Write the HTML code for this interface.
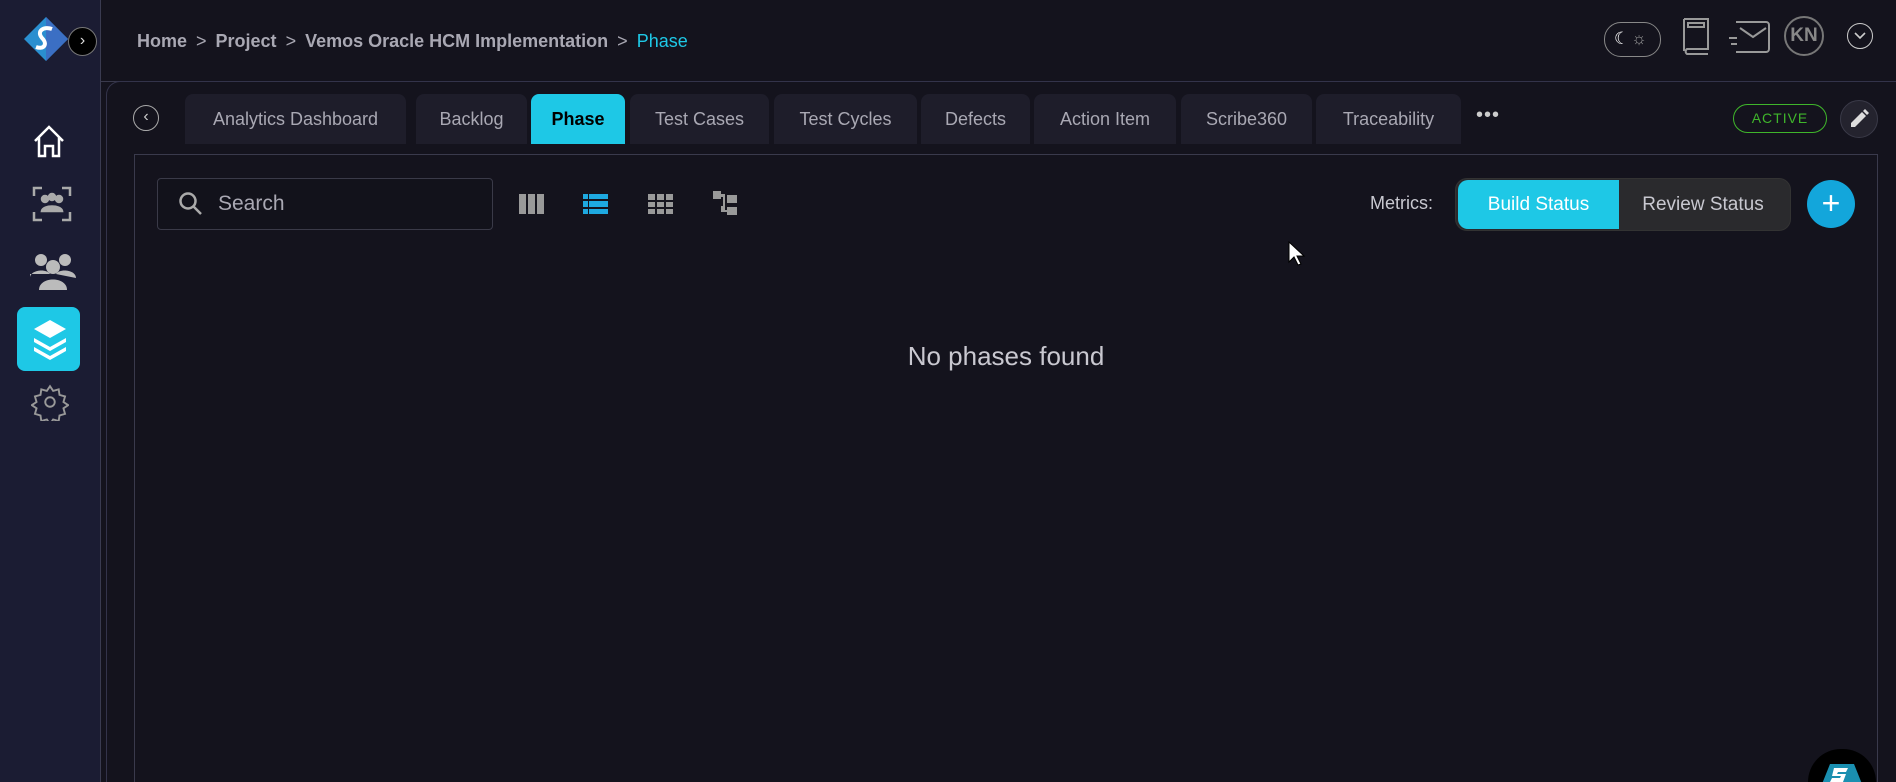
<!DOCTYPE html>
<html style="overflow:hidden;width:1896px;height:782px"><head><meta charset="utf-8"><style>
*{box-sizing:border-box;margin:0;padding:0}
body{width:1896px;height:782px;overflow:hidden;background:#14131d;font-family:"Liberation Sans",sans-serif;position:relative}
.a{position:absolute}
.side{left:0;top:0;width:101px;height:782px;background:#1b1c33;border-right:1px solid #3a3b50}
.bc{left:137px;top:31px;font-size:18px;font-weight:bold;color:#a9a8b3;white-space:nowrap}
.bc span.s{color:#a9a8b3;font-weight:normal;margin:0 9px}
.hdr{left:101px;top:81px;width:1795px;height:1px;background:#3a3a4c}
.panel{left:106px;top:81px;width:1790px;height:701px;border:1px solid #33334a;border-radius:14px 0 0 0;border-right:none;border-bottom:none}
.tab{top:94px;height:50px;background:#1e1d2a;border-radius:8px 8px 0 0;color:#a9a8b3;font-size:18px;text-align:center;line-height:50px}
.inner{left:134px;top:154px;width:1744px;height:628px;border:1px solid #3a3a4c;border-bottom:none}
</style></head><body>
<div class="a side"></div>
<svg class="a" style="left:20px;top:14px" width="52" height="52" viewBox="0 0 52 52"><path d="M26 3 L48 25 L26 47 L4 25 Z" fill="#2a8fd0"/><path d="M26 3 L48 25 L26 47 Z" fill="#3b6fc4"/><path d="M32 15 C24 12 16 17 22 24 C28 30 24 36 16 33" stroke="#fff" stroke-width="4" fill="none"/></svg>
<div class="a" style="left:68px;top:27px;width:29px;height:29px;border-radius:50%;background:#000;border:1px solid #777;color:#ddd;font-size:16px;text-align:center;line-height:26px">›</div>
<svg class="a" style="left:32px;top:124px" width="34" height="36" viewBox="0 0 34 36" fill="none" stroke="#fff" stroke-width="2.5"><path d="M3 17 L17 3 L31 17 M7 13 V32 H13 V22 H21 V32 H27 V13"/></svg>
<svg class="a" style="left:32px;top:186px" width="40" height="36" viewBox="0 0 40 36" fill="none" stroke="#aaa" stroke-width="2.5"><path d="M2 10V2h8M30 2h8v8M2 26v8h8M30 34h8v-8"/><circle cx="13" cy="13" r="3" fill="#aaa"/><circle cx="20" cy="11" r="3" fill="#aaa"/><circle cx="27" cy="13" r="3" fill="#aaa"/><path d="M10 25c1-6 19-6 20 0z" fill="#aaa"/></svg>
<svg class="a" style="left:30px;top:252px" width="46" height="40" viewBox="0 0 46 40" fill="#bbb"><circle cx="11" cy="8" r="6"/><circle cx="35" cy="8" r="6"/><circle cx="23" cy="15" r="7"/><path d="M0 26c0-8 16-10 20-4H0zM26 22c4-6 20-4 20 4z"/><path d="M9 38c0-14 28-14 28 0z"/></svg>
<div class="a" style="left:17px;top:307px;width:63px;height:64px;background:#1ec8e6;border-radius:8px"></div>
<svg class="a" style="left:32px;top:318px" width="36" height="42" viewBox="0 0 36 42" fill="#fff"><path d="M18 2L34 11L18 20L2 11Z"/><path d="M2 20L18 29L34 20L34 24L18 33L2 24Z"/><path d="M2 29L18 38L34 29L34 33L18 42L2 33Z"/></svg>
<svg class="a" style="left:31px;top:383px" width="38" height="38" viewBox="0 0 24 24" fill="none" stroke="#999" stroke-width="1.2"><circle cx="12" cy="12" r="3"/><path d="M12 2l2 3 3.5-1 .5 3.5 3.5 1-1 3.5 3 2-3 2 1 3.5-3.5 1-.5 3.5-3.5-1-2 3-2-3-3.5 1-.5-3.5-3.5-1 1-3.5-3-2 3-2-1-3.5 3.5-1 .5-3.5 3.5 1z"/></svg>

<div class="a bc">Home<span class="s">&gt;</span>Project<span class="s">&gt;</span>Vemos Oracle HCM Implementation<span class="s">&gt;</span><span style="color:#1ec8e6;font-weight:normal">Phase</span></div>
<div class="a" style="left:1604px;top:22px;width:57px;height:35px;border:1px solid #888;border-radius:17px;color:#fff;font-size:17px;line-height:32px;padding-left:9px">☾<span style="color:#999;margin-left:2px">☼</span></div>
<svg class="a" style="left:1682px;top:17px" width="28" height="38" viewBox="0 0 28 38" fill="none" stroke="#999" stroke-width="2"><path d="M2 2h24v30H5a3 3 0 0 0 0 5h21M2 2v32"/><rect x="6" y="6" width="16" height="4"/></svg>
<svg class="a" style="left:1728px;top:20px" width="42" height="34" viewBox="0 0 42 34" fill="none" stroke="#999" stroke-width="2"><path d="M8 2h30a3 3 0 0 1 3 3v24a3 3 0 0 1-3 3H8M12 8l13 9 13-9M1 18h8M3 24h6"/></svg>
<div class="a" style="left:1784px;top:16px;width:40px;height:40px;border-radius:50%;border:2px solid #777;color:#888;font-weight:bold;font-size:19px;text-align:center;line-height:36px">KN</div>
<div class="a" style="left:1847px;top:23px;width:26px;height:26px;border-radius:50%;border:1.5px solid #ccc"></div>
<svg class="a" style="left:1854px;top:32px" width="12" height="8" viewBox="0 0 12 8" fill="none" stroke="#ccc" stroke-width="1.6"><path d="M1 1l5 5 5-5"/></svg>

<div class="a hdr"></div>
<div class="a panel"></div>
<div class="a" style="left:133px;top:105px;width:26px;height:26px;border-radius:50%;border:1.5px solid #aaa;color:#ccc;font-size:16px;text-align:center;line-height:22px">‹</div>
<div class="a tab" style="left:185px;width:221px">Analytics Dashboard</div>
<div class="a tab" style="left:416px;width:111px">Backlog</div>
<div class="a tab" style="left:531px;width:94px;background:#1ec8e6;color:#000;font-weight:bold">Phase</div>
<div class="a tab" style="left:630px;width:139px">Test Cases</div>
<div class="a tab" style="left:774px;width:143px">Test Cycles</div>
<div class="a tab" style="left:921px;width:109px">Defects</div>
<div class="a tab" style="left:1034px;width:142px">Action Item</div>
<div class="a tab" style="left:1181px;width:131px">Scribe360</div>
<div class="a tab" style="left:1316px;width:145px">Traceability</div>
<div class="a" style="left:1476px;top:104px;color:#ccc;font-size:20px;letter-spacing:1px">•••</div>
<div class="a" style="left:1733px;top:104px;width:94px;height:29px;border:1.5px solid #3fb52b;border-radius:15px;color:#3fb52b;font-size:14px;text-align:center;line-height:26px;letter-spacing:1px">ACTIVE</div>
<div class="a" style="left:1840px;top:100px;width:38px;height:38px;border-radius:50%;background:#24232e;border:1px solid #3a3a48"></div>
<svg class="a" style="left:1849px;top:109px" width="20" height="20" viewBox="0 0 20 20" fill="#ddd"><path d="M2 14L13 3l4 4L6 18H2z M14 2l2-2 4 4-2 2z"/></svg>

<div class="a inner"></div>
<div class="a" style="left:157px;top:178px;width:336px;height:52px;border:1px solid #3a3a48;border-radius:4px;background:#12121b"></div>
<svg class="a" style="left:178px;top:191px" width="26" height="26" viewBox="0 0 26 26" fill="none" stroke="#aaa" stroke-width="2.5"><circle cx="10" cy="10" r="7.5"/><path d="M15.5 15.5L23 23"/></svg>
<div class="a" style="left:218px;top:192px;font-size:21px;color:#a9a8b3">Search</div>
<svg class="a" style="left:519px;top:192px" width="26" height="24" viewBox="0 0 26 24" fill="#999"><rect x="0" y="2" width="7" height="20"/><rect x="9" y="2" width="7" height="20"/><rect x="18" y="2" width="7" height="20"/></svg>
<svg class="a" style="left:583px;top:192px" width="25" height="24" viewBox="0 0 25 24" fill="#1ea9e0"><rect x="0" y="2" width="5" height="5"/><rect x="6" y="2" width="19" height="5"/><rect x="0" y="9" width="5" height="6"/><rect x="6" y="9" width="19" height="6"/><rect x="0" y="17" width="5" height="5"/><rect x="6" y="17" width="19" height="5"/></svg>
<svg class="a" style="left:648px;top:192px" width="25" height="24" viewBox="0 0 25 24" fill="#999"><rect x="0" y="2" width="7" height="6"/><rect x="9" y="2" width="7" height="6"/><rect x="18" y="2" width="7" height="6"/><rect x="0" y="10" width="7" height="5"/><rect x="9" y="10" width="7" height="5"/><rect x="18" y="10" width="7" height="5"/><rect x="0" y="17" width="7" height="5"/><rect x="9" y="17" width="7" height="5"/><rect x="18" y="17" width="7" height="5"/></svg>
<svg class="a" style="left:713px;top:191px" width="26" height="26" viewBox="0 0 26 26" fill="#999"><rect x="0" y="0" width="8" height="8"/><rect x="14" y="4" width="10" height="8"/><rect x="14" y="16" width="10" height="8"/><path d="M8 3h4v16h2v2h-6V15h2V6H8z"/></svg>
<div class="a" style="left:1370px;top:193px;font-size:18px;color:#c8c8d0">Metrics:</div>
<div class="a" style="left:1455px;top:178px;width:336px;height:53px;background:#2a2a2d;border-radius:12px;border:1px solid #333"></div>
<div class="a" style="left:1458px;top:180px;width:161px;height:49px;background:#1ec8e6;border-radius:10px 0 0 10px;color:#fff;font-size:19px;text-align:center;line-height:49px">Build Status</div>
<div class="a" style="left:1619px;top:180px;width:168px;height:49px;color:#c8c8d0;font-size:19px;text-align:center;line-height:49px">Review Status</div>
<div class="a" style="left:1807px;top:180px;width:48px;height:48px;border-radius:50%;background:#13a6db;color:#fff;font-size:32px;text-align:center;line-height:46px">+</div>
<div class="a" style="left:0;width:2012px;top:341px;text-align:center;font-size:26px;color:#c9c8d0">No phases found</div>
<svg class="a" style="left:1288px;top:241px" width="18" height="26" viewBox="0 0 18 26"><path d="M1 1v20l5-5 4 8 3-1-4-8h7z" fill="#fff" stroke="#000" stroke-width="1"/></svg>
<div class="a" style="left:1808px;top:749px;width:68px;height:33px;border-radius:34px 34px 0 0;background:#000;overflow:hidden"></div>
<svg class="a" style="left:1822px;top:764px" width="40" height="18" viewBox="0 0 40 18"><path d="M8 0h24l8 20H0z" fill="#1a8fb0"/><path d="M12 4h14l-2 4h-8l-1 2h9l-3 8H8l2-4h8l1-2h-9z" fill="#fff"/></svg>
</body></html>
